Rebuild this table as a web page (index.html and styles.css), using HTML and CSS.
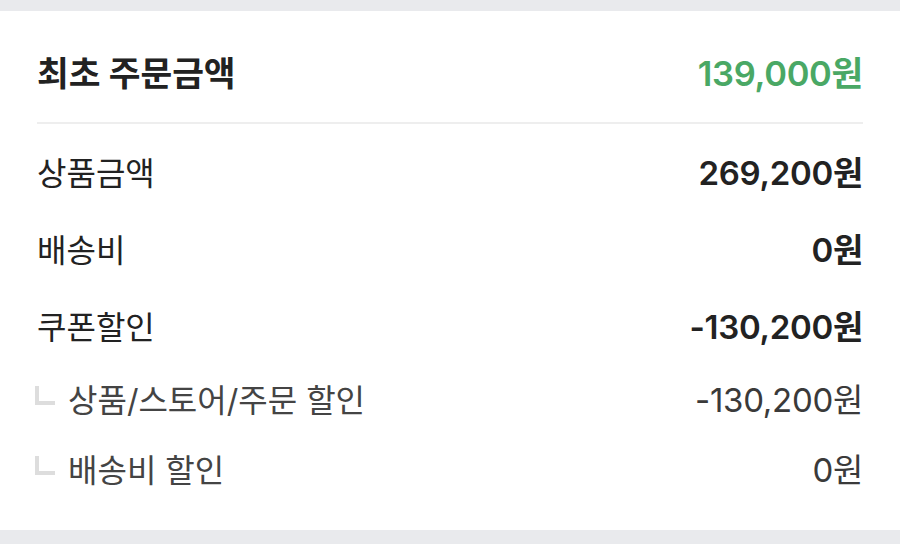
FILE: index.html
```html
<!DOCTYPE html>
<html lang="ko">
<head>
<meta charset="utf-8">
<link rel="stylesheet" href="styles.css">
</head>
<body>
<div class="page">
  <section class="card">
    <div class="head">
      <span class="head-label">최초 주문금액</span>
      <span class="head-value">139,000원</span>
    </div>
    <div class="list">
      <div class="row main"><span class="label">상품금액</span><span class="value">269,200원</span></div>
      <div class="row main"><span class="label">배송비</span><span class="value">0원</span></div>
      <div class="row main"><span class="label">쿠폰할인</span><span class="value">-130,200원</span></div>
      <div class="row sub"><span class="label"><i class="branch"></i>상품/스토어/주문 할인</span><span class="value">-130,200원</span></div>
      <div class="row sub"><span class="label"><i class="branch"></i>배송비 할인</span><span class="value">0원</span></div>
    </div>
  </section>
</div>
</body>
</html>
```

FILE: styles.css
```css
html, body {
  margin: 0;
  padding: 0;
  background: #e9eaed;
}
body {
  font-family: Inter, "Noto Sans CJK KR", sans-serif;
  color: #222;
}
.page {
  padding: 11px 0 14px;
}
.card {
  background: #fff;
  padding: 0 37px 27px;
}
.head {
  display: flex;
  justify-content: space-between;
  align-items: center;
  height: 113px;
  padding-top: 8px;
  box-sizing: border-box;
  border-bottom: 2px solid #eeeeee;
}
.head-label {
  font-size: 34.5px;
  font-weight: 700;
  color: #222;
  letter-spacing: 0;
}
.head-value {
  font-size: 34.5px;
  font-weight: 600;
  color: #4aa865;
  letter-spacing: -0.3px;
}
.list {
  padding-top: 8px;
}
.row {
  display: flex;
  justify-content: space-between;
  align-items: center;
}
.row.main {
  height: 77px;
}
.row.sub {
  height: 70px;
}
.label {
  display: flex;
  align-items: center;
  font-size: 32px;
  letter-spacing: 0;
}
.main .label { color: #222; }
.main .value {
  font-size: 33px;
  font-weight: 600;
  color: #222;
  letter-spacing: -0.3px;
}
.sub .label { color: #444; }
.sub .value {
  font-size: 33px;
  font-weight: 400;
  color: #3a3a3a;
  letter-spacing: -0.3px;
}
.branch {
  display: block;
  width: 16px;
  height: 15px;
  border-left: 4px solid #dddddd;
  border-bottom: 4px solid #dddddd;
  margin: 0 13px 0 -2px;
  transform: translateY(-3px);
}
```
